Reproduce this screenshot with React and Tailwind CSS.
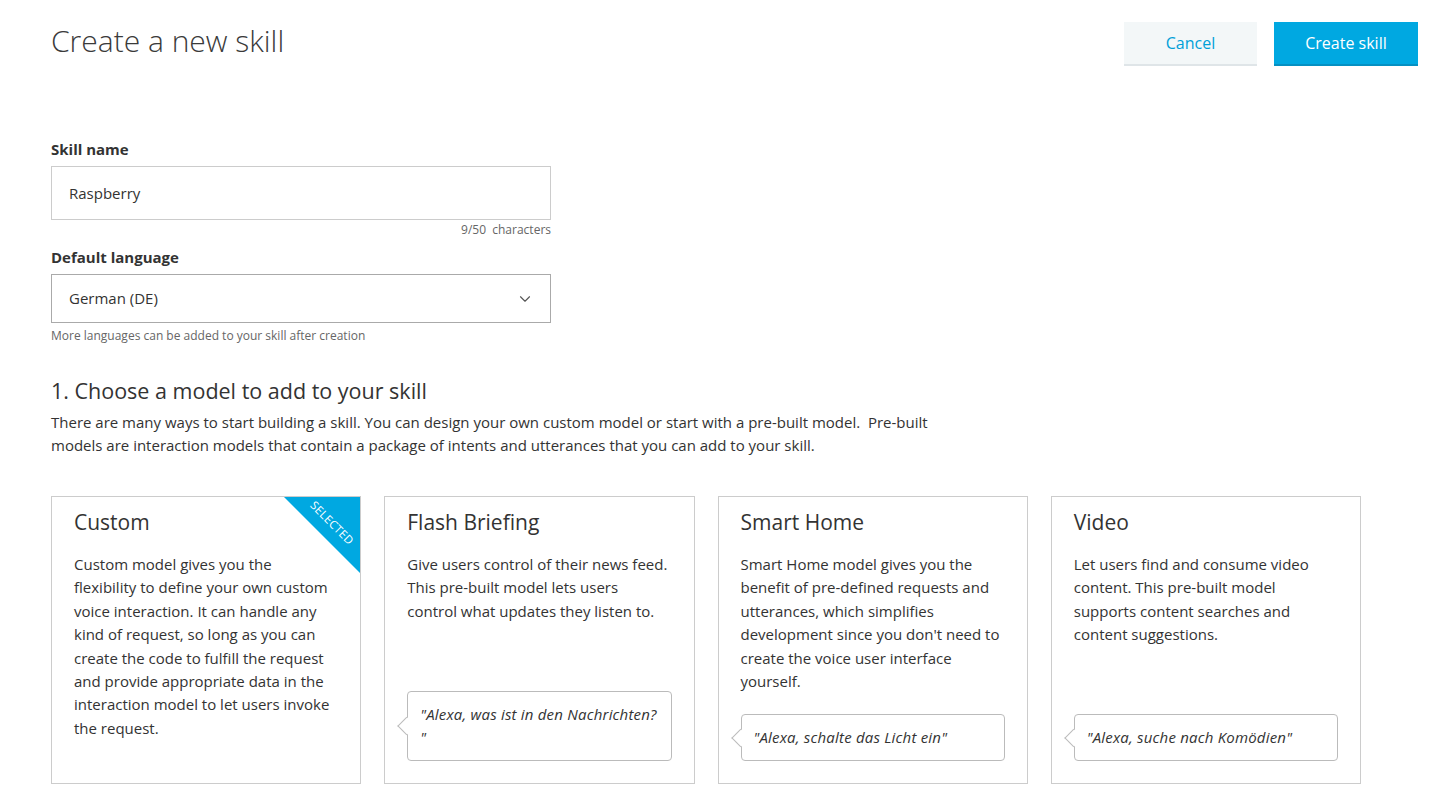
import { ChevronDown } from "lucide-react";

const cards = [
  {
    title: "Custom",
    lines: [
      "Custom model gives you the",
      "flexibility to define your own custom",
      "voice interaction. It can handle any",
      "kind of request, so long as you can",
      "create the code to fulfill the request",
      "and provide appropriate data in the",
      "interaction model to let users invoke",
      "the request.",
    ],
    selected: true,
  },
  {
    title: "Flash Briefing",
    text: "Give users control of their news feed. This pre-built model lets users control what updates they listen to.",
    quote: "\"Alexa, was ist in den Nachrichten? \"",
  },
  {
    title: "Smart Home",
    text: "Smart Home model gives you the benefit of pre-defined requests and utterances, which simplifies development since you don't need to create the voice user interface yourself.",
    quote: "\"Alexa, schalte das Licht ein\"",
  },
  {
    title: "Video",
    text: "Let users find and consume video content. This pre-built model supports content searches and content suggestions.",
    quote: "\"Alexa, suche nach Komödien\"",
  },
];

const Bubble = ({ children }) => (
  <div className="relative mt-auto">
    <div className="absolute left-[-7px] top-1/2 -translate-y-1/2 w-[13px] h-[13px] rotate-45 bg-white border-l border-b border-[#bbb]" />
    <div className="rounded-[4px] border border-[#bbb] bg-white px-[12px] py-[11px] italic text-[15px] leading-[23px] tracking-[0.2px] text-[#333]">
      {children}
    </div>
  </div>
);

const Card = ({ card }) => (
  <div className="relative flex flex-col h-[288px] border border-[#ccc] bg-white px-[22px] pt-[11px] pb-[22px] overflow-hidden">
    {card.selected && (
      <div className="absolute top-0 right-0 w-[76px] h-[76px] overflow-hidden">
        <div className="absolute top-0 right-0 w-0 h-0 border-t-[76px] border-l-[76px] border-t-[#00a8e1] border-l-transparent" />
        <span className="absolute left-[-2px] top-[19px] w-[100px] rotate-45 text-center text-[11.5px] leading-[14px] tracking-[0.3px] text-white">
          SELECTED
        </span>
      </div>
    )}
    <h3 className="text-[21px] leading-[28px] text-[#333]">{card.title}</h3>
    <p className="mt-[17px] text-[15px] leading-[23.4px] text-[#333]">
      {card.lines
        ? card.lines.map((l) => (
            <span key={l} className="block whitespace-nowrap">
              {l}
            </span>
          ))
        : card.text}
    </p>
    {card.quote && <Bubble>{card.quote}</Bubble>}
  </div>
);

export default function App() {
  return (
    <div className="min-h-screen bg-white text-[#333] px-[51px] pt-[22px]" style={{ fontFamily: '"Open Sans", "Noto Sans", sans-serif' }}>
      <div className="flex items-start justify-between">
        <h1 className="mt-[-1px] text-[30px] font-light leading-[40px] text-[#3a3a3a]">Create a new skill</h1>
        <div className="flex gap-[17px] mr-[-38px]">
          <button className="w-[133px] h-[44px] bg-[#f3f7f8] border-b-2 border-[#dfe5e8] text-[16px] text-[#00a0d8]">
            Cancel
          </button>
          <button className="w-[144px] h-[44px] bg-[#00a8e1] border-b-2 border-[#0590c2] text-[16px] text-white">
            Create skill
          </button>
        </div>
      </div>

      <div className="mt-[73px] w-[500px]">
        <label className="block text-[15px] font-bold leading-[20px]">Skill name</label>
        <div className="mt-[7px] h-[54px] border border-[#ccc] flex items-center px-[17px] text-[15px]">Raspberry</div>
        <div className="mt-[2px] text-right text-[12px] leading-[16px] text-[#666]">9/50&nbsp; characters</div>

        <label className="mt-[9px] block text-[15px] font-bold leading-[20px]">Default language</label>
        <div className="mt-[7px] h-[49px] border border-[#aaa] flex items-center justify-between pl-[17px] pr-[14px] text-[15px]">
          <span>German (DE)</span>
          <ChevronDown size={18} strokeWidth={1.5} className="text-[#555] mr-[2px]" />
        </div>
        <div className="mt-[5px] text-[12px] leading-[16px] text-[#666]">More languages can be added to your skill after creation</div>
      </div>

      <h2 className="mt-[32px] text-[21.5px] leading-[30px] text-[#333]">1. Choose a model to add to your skill</h2>
      <p className="mt-[5px] w-[910px] text-[15px] leading-[23px] text-[#333]">
        There are many ways to start building a skill. You can design your own custom model or start with a pre-built model.&nbsp; Pre-built models are interaction models that contain a package of intents and utterances that you can add to your skill.
      </p>

      <div className="mt-[39px] grid grid-cols-4 gap-[23px] w-[1310px]">
        {cards.map((c) => (
          <Card key={c.title} card={c} />
        ))}
      </div>
    </div>
  );
}
